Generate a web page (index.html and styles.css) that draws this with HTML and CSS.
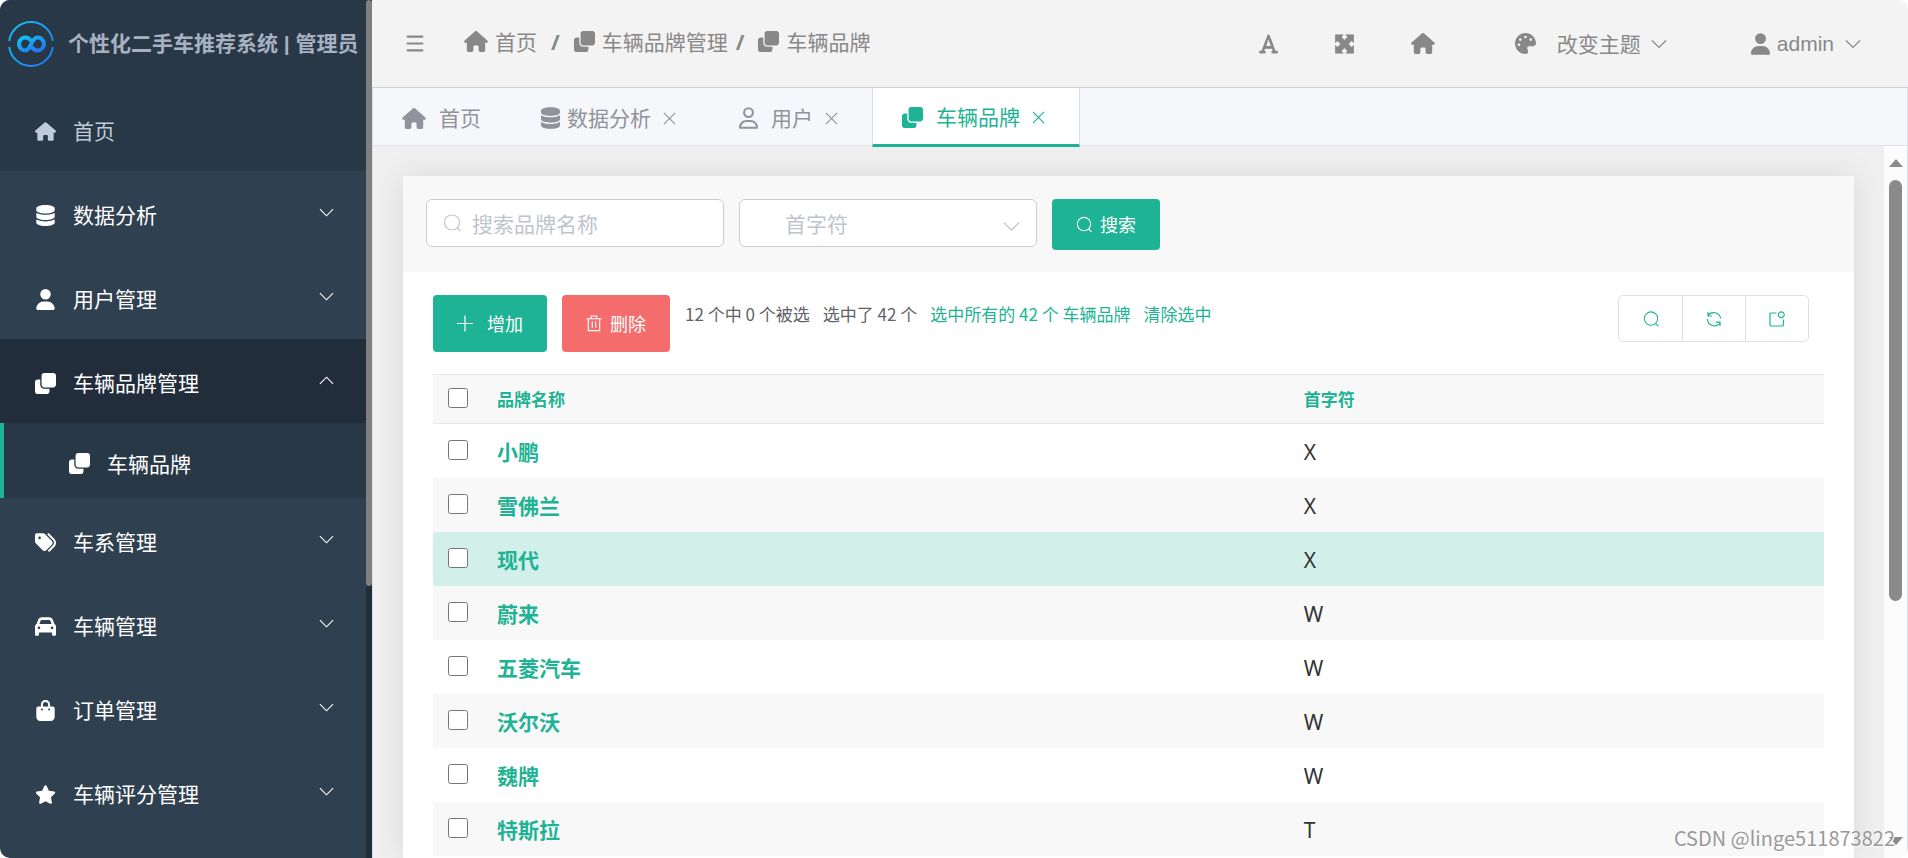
FILE: index.html
```html
<!DOCTYPE html>
<html lang="zh-CN">
<head>
<meta charset="utf-8">
<title>个性化二手车推荐系统 | 管理员</title>
<link rel="stylesheet" href="styles.css">
</head>
<body>
<svg class="sprite" aria-hidden="true">
  <symbol id="house" viewBox="0 0 576 512"><path d="M575.8 255.5c0 18-15 32.1-32 32.1h-32l.7 160.2c0 2.7-.2 5.4-.5 8.1V472c0 22.1-17.9 40-40 40H392c-22.1 0-40-17.9-40-40V384c0-17.7-14.3-32-32-32H256c-17.7 0-32 14.3-32 32v88c0 22.1-17.9 40-40 40H104c-22.1 0-40-17.9-40-40V287.6H32c-18 0-32-14-32-32.1c0-9 3-17 10-24L266.4 8c7-7 15-8 22-8s15 2 21 7L564.8 231.5c8 7 12 15 11 24z"/></symbol>
  <symbol id="database" viewBox="0 0 448 512"><path d="M448 80v48c0 44.2-100.3 80-224 80S0 172.2 0 128V80C0 35.8 100.3 0 224 0S448 35.8 448 80zM393.2 214.7c20.8-7.4 39.9-16.9 54.8-28.6V288c0 44.2-100.3 80-224 80S0 332.2 0 288V186.1c14.9 11.8 34 21.2 54.8 28.6C99.7 230.7 159.5 240 224 240s124.3-9.3 169.2-25.3zM0 346.1c14.9 11.8 34 21.2 54.8 28.6C99.7 390.7 159.5 400 224 400s124.3-9.3 169.2-25.3c20.8-7.4 39.9-16.9 54.8-28.6V432c0 44.2-100.3 80-224 80S0 476.2 0 432V346.1z"/></symbol>
  <symbol id="user" viewBox="0 0 448 512"><path d="M224 256A128 128 0 1 0 224 0a128 128 0 1 0 0 256zm-45.7 48C79.8 304 0 383.8 0 482.3C0 498.7 13.3 512 29.7 512H418.3c16.4 0 29.7-13.3 29.7-29.7C448 383.8 368.2 304 269.7 304H178.3z"/></symbol>
  <symbol id="user-line" viewBox="0 0 448 512"><path d="M304 128a80 80 0 1 0 -160 0 80 80 0 1 0 160 0zM96 128a128 128 0 1 1 256 0A128 128 0 1 1 96 128zM49.3 464H398.7c-8.9-63.3-63.3-112-129-112H178.3c-65.7 0-120.1 48.7-129 112zM0 482.3C0 383.8 79.8 304 178.3 304h91.4C368.2 304 448 383.8 448 482.3c0 16.4-13.3 29.7-29.7 29.7H29.7C13.3 512 0 498.7 0 482.3z"/></symbol>
  <symbol id="clone" viewBox="0 0 512 512"><path d="M0 224C0 188.7 28.65 160 64 160H128V288C128 341 170.1 384 224 384H352V448C352 483.3 323.3 512 288 512H64C28.65 512 0 483.3 0 448V224zM224 352C188.7 352 160 323.3 160 288V64C160 28.65 188.7 0 224 0H448C483.3 0 512 28.65 512 64V288C512 323.3 483.3 352 448 352H224z"/></symbol>
  <symbol id="tags" viewBox="0 0 512 512"><path d="M345 39.1L472.8 168.4c52.4 53 52.4 138.2 0 191.2L360.8 472.9c-9.3 9.4-24.5 9.5-33.9 .2s-9.5-24.5-.2-33.9L438.6 325.9c33.9-34.3 33.9-89.4 0-123.7L310.9 72.9c-9.3-9.4-9.2-24.6 .2-33.9s24.6-9.2 33.9 .2zM0 229.5V80C0 53.5 21.5 32 48 32H197.5c17 0 33.3 6.7 45.3 18.7l168 168c25 25 25 65.5 0 90.5L277.3 442.7c-25 25-65.5 25-90.5 0l-168-168C6.7 262.7 0 246.5 0 229.5zM144 144a32 32 0 1 0 -64 0 32 32 0 1 0 64 0z"/></symbol>
  <symbol id="car" viewBox="0 0 512 512"><path d="M135.2 117.4L109.1 192H402.9l-26.1-74.6C372.3 104.6 360.2 96 346.6 96H165.4c-13.6 0-25.7 8.6-30.2 21.4zM39.6 196.8L74.8 96.3C88.3 57.8 124.6 32 165.4 32H346.6c40.8 0 77.1 25.8 90.6 64.3l35.2 100.5c23.2 9.6 39.6 32.5 39.6 59.2V448c0 17.7-14.3 32-32 32H448c-17.7 0-32-14.3-32-32V400H96v48c0 17.7-14.3 32-32 32H32c-17.7 0-32-14.3-32-32V256c0-26.7 16.4-49.6 39.6-59.2zM128 288a32 32 0 1 0 -64 0 32 32 0 1 0 64 0zm288 32a32 32 0 1 0 0-64 32 32 0 1 0 0 64z"/></symbol>
  <symbol id="bag" viewBox="0 0 448 512"><path d="M160 112c0-35.3 28.7-64 64-64s64 28.7 64 64v48H160V112zm-48 48H48c-26.5 0-48 21.5-48 48V416c0 53 43 96 96 96H352c53 0 96-43 96-96V208c0-26.5-21.5-48-48-48H336V112C336 50.1 285.9 0 224 0S112 50.1 112 112v48zm24 48a24 24 0 1 1 0 48 24 24 0 1 1 0-48zm152 24a24 24 0 1 1 48 0 24 24 0 1 1 -48 0z"/></symbol>
  <symbol id="star" viewBox="0 0 576 512"><path d="M316.9 18C311.6 7 300.4 0 288.1 0s-23.4 7-28.8 18L195 150.3 51.4 171.5c-12 1.8-22 10.2-25.7 21.7s-.7 24.2 7.9 32.7L137.8 329 113.2 474.7c-2 12 3 24.2 12.9 31.3s23 8 33.8 2.3l128.3-68.5 128.3 68.5c10.8 5.7 23.9 4.9 33.8-2.3s14.9-19.3 12.9-31.3L438.5 329 542.7 225.9c8.6-8.5 11.7-21.2 7.9-32.7s-13.7-19.9-25.7-21.7L381.2 150.3 316.9 18z"/></symbol>
  <symbol id="palette" viewBox="0 0 512 512"><path d="M512 256c0 .9 0 1.8 0 2.7c-.4 36.5-33.6 61.3-70.1 61.3H344c-26.5 0-48 21.5-48 48c0 3.4 .4 6.7 1 9.9c2.1 10.2 6.5 20 10.8 29.9c6.1 13.8 12.1 27.5 12.1 42c0 31.8-21.6 60.7-53.4 62c-3.5 .1-7 .2-10.6 .2C114.6 512 0 397.4 0 256S114.6 0 256 0S512 114.6 512 256zM128 288a32 32 0 1 0 -64 0 32 32 0 1 0 64 0zm0-96a32 32 0 1 0 0-64 32 32 0 1 0 0 64zM288 96a32 32 0 1 0 -64 0 32 32 0 1 0 64 0zm96 96a32 32 0 1 0 0-64 32 32 0 1 0 0 64z"/></symbol>
  <symbol id="type-size" viewBox="0 0 448 512"><g fill="none" stroke="currentColor" stroke-width="62" stroke-linecap="round" stroke-linejoin="round"><path d="M32 448H128M320 448H416M80 448L224 64L368 448M140 336H308"/></g></symbol>
  <symbol id="expand" viewBox="0 0 448 512"><path d="M8 40H190L150 92L224 168L298 92L258 40H440V222L388 182L314 256L388 330L440 290V472H258L298 420L224 344L150 420L190 472H8V290L60 330L134 256L60 182L8 222Z" stroke="currentColor" stroke-width="16" stroke-linejoin="round"/></symbol>
  <symbol id="bars" viewBox="0 0 448 512"><path d="M26 70H422M26 256H422M26 442H422" fill="none" stroke="currentColor" stroke-width="58" stroke-linecap="round"/></symbol>
  <symbol id="down" viewBox="0 0 16 16"><path d="M1 4.500L8 11.500L15 4.500" fill="none" stroke="currentColor" stroke-width="1.200"/></symbol>
  <symbol id="up" viewBox="0 0 16 16"><path d="M1 11.500L8 4.500L15 11.500" fill="none" stroke="currentColor" stroke-width="1.200"/></symbol>
  <symbol id="close" viewBox="0 0 14 14"><path d="M1 1L13 13M13 1L1 13" fill="none" stroke="currentColor" stroke-width="1.200"/></symbol>
  <symbol id="search" viewBox="0 0 18 18"><path d="M9 1A7.500 7.500 0 1 0 9 16A7.500 7.500 0 1 0 9 1M14.200 14L17.400 17.200" fill="none" stroke="currentColor" stroke-width="1.200"/></symbol>
  <symbol id="plus" viewBox="0 0 16 16"><path d="M8 0V16M0 8H16" fill="none" stroke="currentColor" stroke-width="1.200"/></symbol>
  <symbol id="trash" viewBox="0 0 16 18"><path d="M0 4H16M2 4V16.500H14V4M5 4V1H11V4M6.200 7V13.500M9.800 7V13.500" fill="none" stroke="currentColor" stroke-width="1.200"/></symbol>
  <symbol id="refresh" viewBox="0 0 16 16"><path d="M2 4.500A7 7 0 0 1 14.600 7.500M1.400 8A7 7 0 0 0 14 12M2 1V5H6M14 15V11.200H10" fill="none" stroke="currentColor" stroke-width="1.200"/></symbol>
  <symbol id="export" viewBox="0 0 16 16"><path d="M7.500 2H2Q1 2 1 3V14Q1 15 2 15H13Q14.500 15 14.500 14V8.500M12.300 .8A2.900 2.900 0 1 0 12.300 6.600A2.900 2.900 0 1 0 12.300 .8" fill="none" stroke="currentColor" stroke-width="1.200"/></symbol>
</svg>
<div class="app">
  <aside class="sidebar">
    <nav class="side-nav">
      <div class="brand">
        <svg class="logo" viewBox="0 0 46 46" aria-hidden="true">
          <defs><linearGradient id="blue" x1="0" y1="0" x2="1" y2="1"><stop offset="0" stop-color="#13c2f5"/><stop offset="1" stop-color="#2370f0"/></linearGradient></defs>
          <g fill="none" stroke="url(#blue)">
            <path d="M1.200 20A22 22 0 0 1 44.800 20M1.200 26A22 22 0 0 0 44.800 26" stroke-width="2"/>
            <path d="M23.500 20C21.500 17.500 19.500 16.500 17.500 16.500A6.500 6.500 0 0 0 17.500 29.500C23 29.500 23 16.500 29.500 16.500A6.500 6.500 0 0 1 29.500 29.500C27 29.500 25.500 28.500 23.500 26" stroke-width="4"/>
          </g>
        </svg>
        <h1 class="brand-name">个性化二手车推荐系统 | 管理员</h1>
      </div>
      <a class="nav-item nav-home" href="#"><span class="nav-icon"><svg class="fa"><use href="#house"/></svg></span>首页</a>
      <a class="nav-item" href="#"><span class="nav-icon"><svg class="fa"><use href="#database"/></svg></span>数据分析<svg class="caret"><use href="#down"/></svg></a>
      <a class="nav-item" href="#"><span class="nav-icon"><svg class="fa"><use href="#user"/></svg></span>用户管理<svg class="caret"><use href="#down"/></svg></a>
      <a class="nav-item nav-open" href="#"><span class="nav-icon"><svg class="fa"><use href="#clone"/></svg></span>车辆品牌管理<svg class="caret"><use href="#up"/></svg></a>
      <a class="nav-sub" href="#"><span class="nav-icon"><svg class="fa"><use href="#clone"/></svg></span>车辆品牌</a>
      <a class="nav-item" href="#"><span class="nav-icon"><svg class="fa"><use href="#tags"/></svg></span>车系管理<svg class="caret"><use href="#down"/></svg></a>
      <a class="nav-item" href="#"><span class="nav-icon"><svg class="fa"><use href="#car"/></svg></span>车辆管理<svg class="caret"><use href="#down"/></svg></a>
      <a class="nav-item" href="#"><span class="nav-icon"><svg class="fa"><use href="#bag"/></svg></span>订单管理<svg class="caret"><use href="#down"/></svg></a>
      <a class="nav-item" href="#"><span class="nav-icon"><svg class="fa"><use href="#star"/></svg></span>车辆评分管理<svg class="caret"><use href="#down"/></svg></a>
    </nav>
    <div class="side-track"><div class="side-thumb"></div></div>
  </aside>
  <div class="main">
    <header class="topbar">
      <button class="plain" type="button" aria-label="折叠菜单"><svg class="fa-bars"><use href="#bars"/></svg></button>
      <nav class="crumbs">
        <a class="crumb" href="#"><svg class="fa wide"><use href="#house"/></svg>首页</a>
        <span class="slash">/</span>
        <a class="crumb" href="#"><svg class="fa"><use href="#clone"/></svg>车辆品牌管理</a>
        <span class="slash slash-tight">/</span>
        <a class="crumb" href="#"><svg class="fa"><use href="#clone"/></svg>车辆品牌</a>
      </nav>
      <div class="tools">
        <button class="plain" type="button" aria-label="字体"><svg class="fa narrow"><use href="#type-size"/></svg></button>
        <button class="plain" type="button" aria-label="全屏"><svg class="fa narrow"><use href="#expand"/></svg></button>
        <button class="plain" type="button" aria-label="主页"><svg class="fa wide"><use href="#house"/></svg></button>
        <button class="plain theme" type="button"><svg class="fa"><use href="#palette"/></svg><span class="theme-name">改变主题</span><svg class="arrow"><use href="#down"/></svg></button>
        <button class="plain account" type="button"><svg class="fa narrow"><use href="#user"/></svg><span>admin</span><svg class="arrow"><use href="#down"/></svg></button>
      </div>
    </header>
    <div class="tabs">
      <a class="tab" href="#"><svg class="fa wide"><use href="#house"/></svg><span class="tab-name">首页</span></a>
      <a class="tab" href="#"><svg class="fa narrow"><use href="#database"/></svg><span class="tab-name tab-close-up">数据分析</span><svg class="cross"><use href="#close"/></svg></a>
      <a class="tab" href="#"><svg class="fa narrow"><use href="#user-line"/></svg><span class="tab-name">用户</span><svg class="cross"><use href="#close"/></svg></a>
      <a class="tab tab-active" href="#"><svg class="fa"><use href="#clone"/></svg><span class="tab-name">车辆品牌</span><svg class="cross"><use href="#close"/></svg></a>
    </div>
    <div class="content">
      <div class="page">
        <section class="card">
          <form class="filters">
            <label class="field"><svg class="field-icon"><use href="#search"/></svg><input class="control" type="text" placeholder="搜索品牌名称" aria-label="搜索品牌名称"></label>
            <label class="field"><select class="control" aria-label="首字符"><option>首字符</option></select><svg class="field-arrow"><use href="#down"/></svg></label>
            <button class="btn btn-search" type="button"><svg class="btn-icon"><use href="#search"/></svg>搜索</button>
          </form>
          <div class="actions">
            <button class="btn btn-add" type="button"><svg class="btn-icon"><use href="#plus"/></svg>增加</button>
            <button class="btn btn-delete" type="button"><svg class="btn-icon"><use href="#trash"/></svg>删除</button>
            <p class="counts"><span>12 个中 0 个被选</span><span>选中了 42 个</span><a href="#">选中所有的 42 个 车辆品牌</a><a href="#">清除选中</a></p>
            <div class="group">
              <button class="group-btn" type="button" aria-label="搜索"><svg class="group-icon"><use href="#search"/></svg></button>
              <button class="group-btn" type="button" aria-label="刷新"><svg class="group-icon"><use href="#refresh"/></svg></button>
              <button class="group-btn" type="button" aria-label="导出"><svg class="group-icon"><use href="#export"/></svg></button>
            </div>
          </div>
          <table class="grid">
            <colgroup><col class="col-check"><col class="col-name"><col></colgroup>
            <thead><tr><th><input type="checkbox" aria-label="全选"></th><th>品牌名称</th><th>首字符</th></tr></thead>
            <tbody>
              <tr><td><input type="checkbox" aria-label="小鹏"></td><th><a href="#">小鹏</a></th><td>X</td></tr>
              <tr><td><input type="checkbox" aria-label="雪佛兰"></td><th><a href="#">雪佛兰</a></th><td>X</td></tr>
              <tr class="hovered"><td><input type="checkbox" aria-label="现代"></td><th><a href="#">现代</a></th><td>X</td></tr>
              <tr><td><input type="checkbox" aria-label="蔚来"></td><th><a href="#">蔚来</a></th><td>W</td></tr>
              <tr><td><input type="checkbox" aria-label="五菱汽车"></td><th><a href="#">五菱汽车</a></th><td>W</td></tr>
              <tr><td><input type="checkbox" aria-label="沃尔沃"></td><th><a href="#">沃尔沃</a></th><td>W</td></tr>
              <tr><td><input type="checkbox" aria-label="魏牌"></td><th><a href="#">魏牌</a></th><td>W</td></tr>
              <tr><td><input type="checkbox" aria-label="特斯拉"></td><th><a href="#">特斯拉</a></th><td>T</td></tr>
            </tbody>
          </table>
        </section>
      </div>
      <div class="track"><div class="tri-up"></div><div class="thumb"></div><div class="tri-down"></div></div>
    </div>
  </div>
  <div class="watermark">CSDN @linge511873822</div>
</div>
</body>
</html>
```
FILE: styles.css
```css
* { box-sizing: border-box; }
body {
  margin: 0;
  background: #fff;
  font-family: "Noto Sans", "Noto Sans CJK SC", sans-serif;
  font-size: 21px;
  line-height: 30px;
}
a { color: inherit; text-decoration: none; }
button { font: inherit; color: inherit; cursor: pointer; }
svg { fill: currentColor; flex: none; display: block; }
.sprite { position: absolute; width: 0; height: 0; }
.fa { width: 21px; height: 21px; }
.fa-bars { width: 20px; height: 19px; }
.narrow { width: 19px; height: 22px; }
.wide { width: 24px; height: 21px; }

.app {
  position: relative;
  display: flex;
  height: 100vh;
  overflow: hidden;
  border-radius: 10px;
}

/* Sidebar */
.sidebar { display: flex; flex: none; width: 372px; background: #2f4050; }
.side-nav { flex: 1; color: #fff; overflow: hidden; }
.side-track { width: 6px; background: #222d3a; }
.side-thumb { height: 68.3%; background: #7f7f7f; border-radius: 3px; }
.brand {
  display: flex;
  align-items: center;
  gap: 14px;
  height: 87px;
  padding-left: 8px;
  background: #293846;
}
.logo { width: 46px; height: 46px; }
.brand-name {
  margin: 0;
  font-family: "Liberation Sans", "Noto Sans CJK SC", sans-serif;
  font-size: 21px;
  font-weight: 700;
  color: #a7b1c2;
  white-space: nowrap;
}
.nav-item {
  display: flex;
  align-items: center;
  height: 84px;
  padding: 4px 32px 0 34px;
}
.nav-icon { display: flex; justify-content: center; width: 23px; margin-right: 16px; }
.nav-icon .fa { overflow: visible; }
.nav-home { background: #293846; color: #bfcbd9; }
.nav-open { background: #222d3b; }
.nav-sub {
  display: flex;
  align-items: center;
  height: 75px;
  padding: 6px 0 0 64px;
  border-left: 4px solid #1eb394;
  background: #293846;
}
.caret { width: 15px; height: 15px; margin: 0 0 6px auto; }

/* Top bar */
.main { flex: 1; min-width: 0; display: flex; flex-direction: column; }
.topbar {
  display: flex;
  align-items: center;
  height: 88px;
  flex: none;
  padding: 0 47px 0 33px;
  background: #f3f3f3;
  border-bottom: 1px solid #d2d4d9;
  color: #888;
}
.plain { display: flex; align-items: center; border: 0; padding: 0; background: none; }
.crumbs { display: flex; align-items: center; margin-left: 39px; padding-bottom: 4px; }
.crumb { display: flex; align-items: center; gap: 7px; white-space: nowrap; }
.slash { margin: 0 14px; font-weight: 700; }
.slash-tight { margin: 0 14px 0 8px; }
.tools { display: flex; align-items: center; margin-left: auto; }
.tools > * + * { margin-left: 57px; }
.tools .theme { margin-left: 80px; }
.theme-name { margin: 0 10px 0 21px; }
.tools .account { margin-left: 84px; font-family: "Liberation Sans", sans-serif; gap: 7px; }
.account .arrow { margin-left: 4px; }
.arrow { width: 16px; height: 16px; }

/* Tabs */
.tabs {
  display: flex;
  flex: none;
  height: 58px;
  background: #f5f7fb;
  border-bottom: 1px solid #dfe2ea;
  border-left: 1px solid #dcdfe6;
  border-right: 1px solid #dcdfe6;
  color: #909399;
}
.tab { display: flex; align-items: center; height: 58px; padding: 2px 31px 0 29px; }
.tab:has(.cross) { padding-right: 34px; }
.tab-name { margin-left: 13px; }
.tab-close-up { margin-left: 7px; }
.cross { width: 13px; height: 13px; margin-left: 12px; }
.tab-active {
  position: relative;
  height: 59px;
  background: #fff;
  border-left: 1px solid #dcdfe6;
  border-right: 1px solid #dcdfe6;
  border-bottom: 3px solid #1eb394;
  color: #1eb394;
}

/* Page */
.content {
  flex: 1;
  min-height: 0;
  display: flex;
  background: #f0f0f0;
  border-left: 1px solid #dcdfe6;
  border-right: 1px solid #dcdfe6;
}
.page { flex: 1; min-width: 0; padding: 30px 30px 0; overflow: hidden; }
.card { min-height: 100%; background: #fff; box-shadow: 0 0 30px rgba(0, 0, 0, .1); }
.filters {
  display: flex;
  align-items: flex-start;
  gap: 15px;
  height: 96px;
  padding: 23px;
  background: #f8f8f8;
}
.field { position: relative; width: 298px; color: #c0c4cc; }
.control {
  appearance: none;
  display: block;
  width: 100%;
  height: 48px;
  padding: 2px 40px 0 45px;
  border: 1px solid #ccc;
  border-radius: 6px;
  background: #fff;
  font: inherit;
  color: #c0c4cc;
}
.control::placeholder { color: #c0c4cc; }
.field-icon { position: absolute; left: 17px; top: 15px; width: 18px; height: 18px; }
.field-arrow { position: absolute; right: 17px; top: 19px; width: 17px; height: 17px; }
.btn {
  display: flex;
  align-items: center;
  justify-content: center;
  gap: 8px;
  border: 0;
  border-radius: 4px;
  padding: 0;
  background: #1eb394;
  color: #fff;
  font-size: 18px;
}
.btn-icon { width: 16px; height: 17px; }
.btn-search { width: 108px; height: 51px; }
.actions { display: flex; align-items: flex-start; gap: 15px; padding: 23px 45px 22px 30px; }
.btn-add { width: 114px; height: 57px; gap: 14px; }
.btn-delete { width: 108px; height: 57px; background: #f56c6c; }
.counts {
  display: flex;
  gap: 13px;
  margin: 7px 0 0;
  font-family: "Noto Sans CJK SC", sans-serif;
  font-size: 17px;
  line-height: 24px;
  color: #606266;
  white-space: nowrap;
}
.counts a { color: #1eb394; }
.group { display: flex; margin-left: auto; border: 1px solid #dcdfe6; border-radius: 5px; }
.group-btn {
  display: flex;
  align-items: center;
  justify-content: center;
  width: 63px;
  height: 45px;
  padding: 0;
  border: 0;
  background: none;
  color: #1eb394;
}
.group-btn + .group-btn { border-left: 1px solid #dcdfe6; }
.group-icon { width: 16px; height: 16px; }

/* Table */
.grid {
  width: calc(100% - 60px);
  margin: 0 30px;
  border-collapse: separate;
  border-spacing: 0;
  table-layout: fixed;
}
.col-check { width: 52px; }
.col-name { width: 58%; }
.grid td, .grid th { height: 54px; padding: 2px 12px 0; text-align: left; color: #333; }
.grid td { font-weight: 400; }
.grid th { font-weight: 700; color: #1eb394; }
.grid thead th {
  height: 50px;
  padding-top: 2px;
  background: #f8f8f8;
  border-top: 1px solid #e7e7e7;
  border-bottom: 1px solid #e7e7e7;
  font-size: 17px;
  line-height: 24px;
}
.grid td:first-child, .grid th:first-child { padding: 0 0 3px 15px; }
.grid input { display: block; width: 20px; height: 20px; margin: 0; }
.grid tbody tr:nth-child(even) { background: #f8f8f8; }
.grid tbody .hovered { background: #d2f0e9; }

/* Page scrollbar */
.track {
  display: flex;
  flex-direction: column;
  align-items: center;
  width: 23px;
  padding: 13px 0;
  background: #fcfcfc;
}
.tri-up, .tri-down { border: 7px solid transparent; }
.tri-up { border-top: 0; border-bottom: 8px solid #8a8a8a; }
.tri-down { border-bottom: 0; border-top: 8px solid #8a8a8a; margin-top: auto; }
.thumb { width: 13px; height: 61.3%; margin-top: 13px; border-radius: 7px; background: #8a8a8a; }

.watermark {
  position: absolute;
  right: 13px;
  bottom: 5px;
  font-family: "Noto Sans CJK SC", sans-serif;
  font-size: 20px;
  color: #999;
  text-shadow: 1px 1px 0 #fff;
}
```
